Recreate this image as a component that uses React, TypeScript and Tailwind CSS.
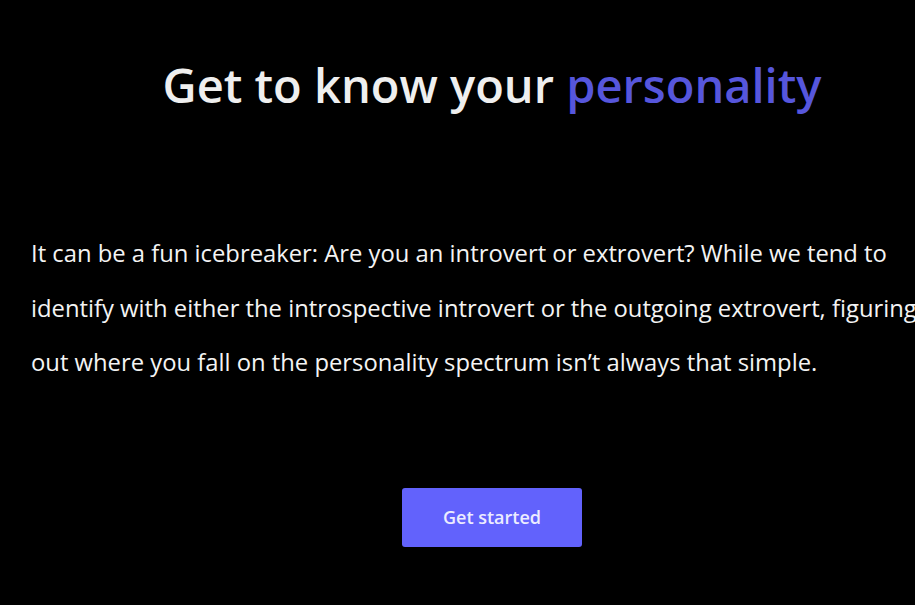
import React from "react";

function App() {
  return (
    <div className="min-h-screen w-full overflow-hidden bg-black" style={{ fontFamily: '"Open Sans", "Noto Sans", sans-serif' }}>
      <div className="flex w-[984px] flex-col px-[31px]">
        <h1 className="mt-[57px] text-center text-[47px] font-semibold leading-[56px] text-[#efefef]">
          Get to know your <span className="text-[#5656dc]">personality</span>
        </h1>
        <p className="mt-[113px] w-[905px] text-[23.8px] leading-[54.5px] text-[#f4f4f4]">
          It can be a fun icebreaker: Are you an introvert or extrovert? While we tend to identify with either the
          introspective introvert or the outgoing extrovert, figuring out where you fall on the personality spectrum
          isn’t always that simple.
        </p>
        <div className="mt-[98px] flex justify-center">
          <button className="h-[59px] w-[180px] rounded-[3px] bg-[#6262fc] text-[18px] font-semibold text-[#ececff]">
            Get started
          </button>
        </div>
      </div>
    </div>
  );
}

export default App;
